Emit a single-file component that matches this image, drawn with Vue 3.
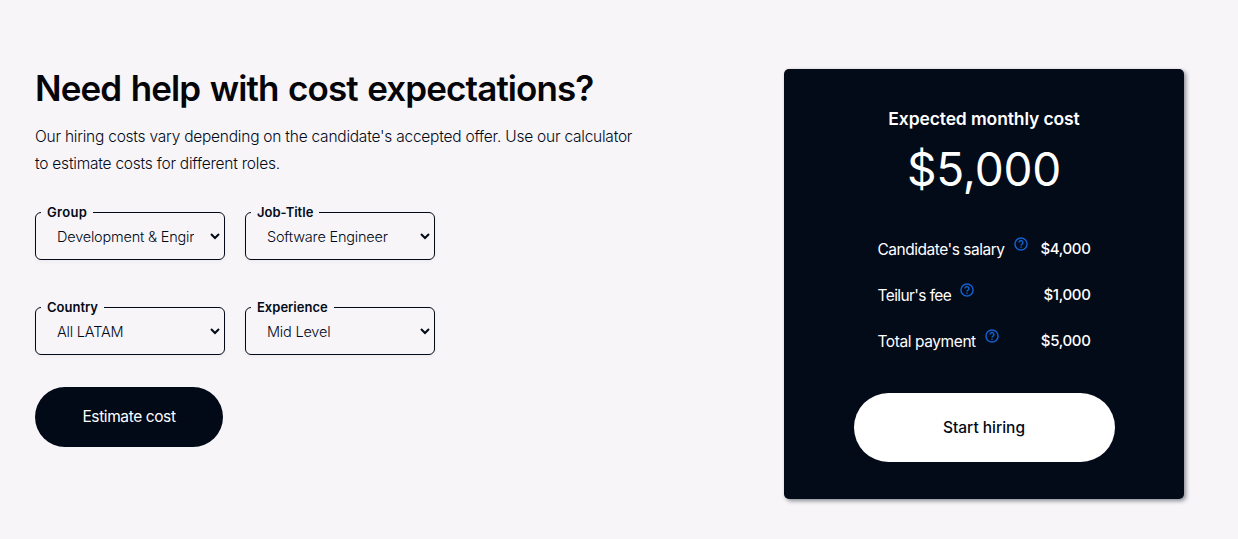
<template>
  <section class="calculator">
    <div class="intro">
      <h2 class="title">Need help with cost expectations?</h2>
      <p class="description">
        <span class="line first">Our hiring costs vary depending on the candidate's accepted offer. Use our calculator</span>
        <span class="line second">to estimate costs for different roles.</span>
      </p>

      <form class="form" @submit.prevent="estimate">
        <div class="fields">
          <fieldset v-for="field in fields" :key="field.key" class="field" :class="field.key">
            <legend><span>{{ field.label }}</span></legend>
            <select v-model="selected[field.key]" :aria-label="field.label">
              <option v-for="option in field.options" :key="option">{{ option }}</option>
            </select>
          </fieldset>
        </div>
        <button type="submit" class="estimate"><span>Estimate cost</span></button>
      </form>
    </div>

    <aside class="card">
      <h3 class="card-title">Expected monthly cost</h3>
      <p class="total">{{ format(total) }}</p>
      <ul class="rows">
        <li v-for="row in rows" :key="row.key" class="row" :class="row.key">
          <span class="label">{{ row.label }}</span>
          <svg class="help" viewBox="0 0 24 24" fill="none" stroke="currentColor" stroke-width="2.5">
            <circle cx="12" cy="12" r="10.4" />
            <path d="M8.7 9.4a3.3 3.3 0 1 1 5 2.8c-1.1.7-1.7 1.2-1.7 2.3" />
            <path d="M12 16.2v2.4" />
          </svg>
          <span class="amount">{{ format(row.amount) }}</span>
        </li>
      </ul>
      <button type="button" class="hire"><span>Start hiring</span></button>
    </aside>
  </section>
</template>

<script setup>
import { computed, reactive, ref } from 'vue';

const fields = [
  { key: 'group', label: 'Group', options: ['Development & Engineering', 'Design', 'Marketing'] },
  { key: 'job', label: 'Job-Title', options: ['Software Engineer', 'Data Engineer', 'QA Engineer'] },
  { key: 'country', label: 'Country', options: ['All LATAM', 'Argentina', 'Colombia', 'Mexico'] },
  { key: 'experience', label: 'Experience', options: ['Junior', 'Mid Level', 'Senior'] },
];

const selected = reactive({
  group: 'Development & Engineering',
  job: 'Software Engineer',
  country: 'All LATAM',
  experience: 'Mid Level',
});

const salaries = { Junior: 3000, 'Mid Level': 4000, Senior: 5500 };
const salary = ref(4000);
const fee = computed(() => salary.value * 0.25);
const total = computed(() => salary.value + fee.value);

const rows = computed(() => [
  { key: 'salary', label: "Candidate's salary", amount: salary.value },
  { key: 'fee', label: "Teilur's fee", amount: fee.value },
  { key: 'payment', label: 'Total payment', amount: total.value },
]);

const estimate = () => {
  salary.value = salaries[selected.experience];
};

const format = (value) => '$' + value.toLocaleString('en-US');
</script>

<style>
body {
  background: #f7f5f8;
}
</style>

<style scoped>
.calculator {
  box-sizing: border-box;
  height: 539px;
  padding: 69px 54px 0 35px;
  display: flex;
  justify-content: space-between;
  align-items: flex-start;
  background: #f7f5f8;
  color: #020a18;
  font-family: Inter, 'Liberation Sans', sans-serif;
}

.title {
  margin: 0;
  font-size: 35px;
  line-height: 38px;
  font-weight: 560;
  letter-spacing: -0.9px;
  word-spacing: 1.6px;
  color: #05050a;
  white-space: nowrap;
}

.description {
  margin: 16px 0 0;
  font-size: 15.5px;
  line-height: 27px;
  font-weight: 300;
  letter-spacing: -0.23px;
  white-space: nowrap;
}

.line {
  display: block;
}

.fields {
  display: grid;
  grid-template-columns: 190px 190px;
  column-gap: 20px;
  row-gap: 39px;
  margin-top: 27px;
}

.field {
  box-sizing: border-box;
  min-width: 0;
  height: 56px;
  margin: 0;
  padding: 0 0 0 5px;
  border: 1px solid #020a18;
  border-radius: 6px;
  box-shadow: 0 2px 4px rgba(0, 0, 0, 0.04);
}

.field legend {
  height: 17px;
  padding: 0 6px;
  font-size: 13px;
  line-height: 16px;
  font-weight: 600;
  white-space: nowrap;
}

.group legend {
  letter-spacing: 0.3px;
}

.field select {
  display: block;
  width: 182px;
  height: 30px;
  margin: 0;
  padding: 0 13px 0 12px;
  border: 0;
  outline: 0;
  background: transparent;
  color: #020a18;
  font-family: inherit;
  font-size: 14.5px;
  font-weight: 300;
  letter-spacing: -0.2px;
}

.estimate,
.hire {
  display: flex;
  align-items: center;
  justify-content: center;
  padding: 0 0 2px;
  border: 0;
  font-family: inherit;
  font-size: 15.5px;
  cursor: pointer;
}

.estimate {
  width: 188px;
  height: 60px;
  margin-top: 32px;
  border-radius: 30px;
  background: #020a18;
  color: #fff;
  letter-spacing: -0.4px;
}

.card {
  box-sizing: border-box;
  width: 400px;
  height: 430px;
  padding-top: 37px;
  display: flex;
  flex-direction: column;
  align-items: center;
  border-radius: 5px;
  background: #030a18;
  color: #fff;
  box-shadow: 2px 2px 4px rgba(2, 10, 24, 0.45);
}

.card-title {
  margin: 0;
  font-size: 17.5px;
  line-height: 26px;
  font-weight: 600;
  letter-spacing: -0.12px;
}

.total {
  margin: 7px 0 0;
  font-size: 46px;
  line-height: 60px;
  letter-spacing: -0.2px;
}

.rows {
  width: 213px;
  margin: 27px 0 0;
  padding: 0;
  list-style: none;
}

.row {
  height: 46px;
  display: flex;
  align-items: center;
  font-size: 15.5px;
  letter-spacing: -0.42px;
  white-space: nowrap;
}

.salary .label {
  letter-spacing: -0.48px;
}

.fee .label {
  letter-spacing: -0.6px;
}

.help {
  flex-shrink: 0;
  width: 14px;
  height: 14px;
  margin: 0 0 10px 9px;
  color: #1260cf;
}

.amount {
  margin-left: auto;
  padding-bottom: 1px;
  font-size: 15px;
  font-weight: 500;
  letter-spacing: -0.35px;
}

.hire {
  width: 261px;
  height: 69px;
  margin-top: 29px;
  padding-bottom: 0;
  border-radius: 35px;
  background: #fff;
  color: #020a18;
  font-weight: 500;
}
</style>
